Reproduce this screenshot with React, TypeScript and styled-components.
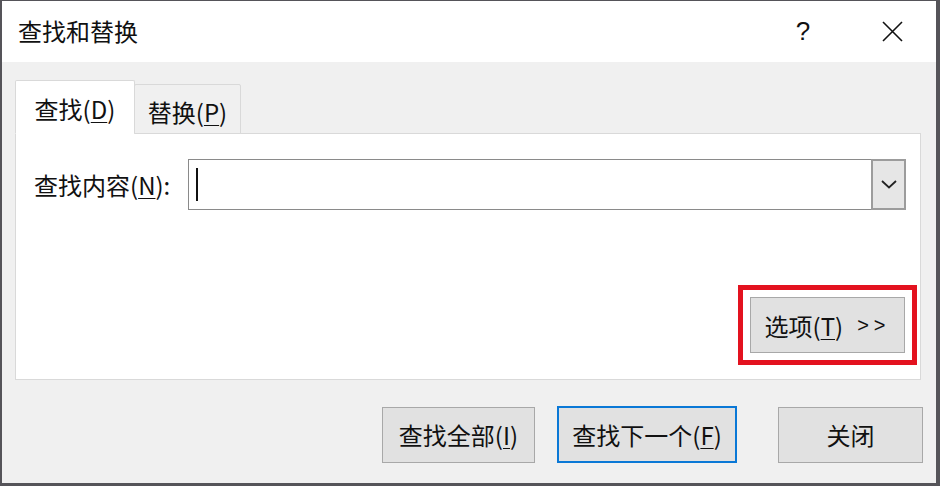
import React from 'react'
import styled, { createGlobalStyle } from 'styled-components'

const GlobalStyle = createGlobalStyle`
  html, body {
    margin: 0;
    padding: 0;
    background: #4a4a4a;
  }
  * {
    box-sizing: border-box;
  }
`

const FONT = `"Noto Sans CJK SC", "Microsoft YaHei", "Noto Sans", sans-serif`

const Dialog = styled.div`
  width: 940px;
  height: 486px;
  display: flex;
  flex-direction: column;
  border-style: solid;
  border-color: #555459;
  border-width: 1px 4px 3px 2px;
  font-family: ${FONT};
  color: #111;
  overflow: hidden;
`

const TitleBar = styled.div`
  height: 61px;
  flex-shrink: 0;
  display: flex;
  align-items: center;
  background: #ffffff;
  padding: 0 14px 0 16px;
`

const Title = styled.div`
  flex: 1;
  font-size: 24px;
  padding-bottom: 2px;
`

const TitleControls = styled.div`
  display: flex;
  align-items: center;
  gap: 29px;
`

const HeaderButton = styled.div`
  width: 60px;
  height: 40px;
  display: flex;
  align-items: center;
  justify-content: center;
  font-family: "Liberation Sans", Arial, sans-serif;
  font-size: 26px;
  color: #111;
`

const Body = styled.div`
  flex: 1;
  display: flex;
  flex-direction: column;
  background: #f0f0f0;
  padding: 18px 15px 20px 13px;
`

const TabRow = styled.div`
  display: flex;
  align-items: flex-end;
  margin-bottom: -1px;
  position: relative;
  z-index: 1;
`

const Tab = styled.div<{ $active?: boolean; $width: number }>`
  width: ${({ $width }) => $width}px;
  height: ${({ $active }) => ($active ? 54 : 50)}px;
  display: flex;
  align-items: center;
  justify-content: center;
  font-size: 24px;
  background: ${({ $active }) => ($active ? '#ffffff' : '#f0f0f0')};
  border: 1px solid #d9d9d9;
  border-bottom: ${({ $active }) => ($active ? '1px solid #ffffff' : '1px solid #d9d9d9')};
  margin-left: ${({ $active }) => ($active ? 0 : -1)}px;
  border-radius: 2px 2px 0 0;
  padding-top: ${({ $active }) => ($active ? 2 : 4)}px;
`

const Panel = styled.div`
  flex: 1;
  display: flex;
  flex-direction: column;
  background: #ffffff;
  border: 1px solid #d9d9d9;
  padding: 25px 3px 14px 18px;
`

const FieldRow = styled.div`
  display: flex;
  align-items: center;
  gap: 18px;
  margin-right: 11px;
`

const Label = styled.div`
  font-size: 24px;
  white-space: nowrap;
`

const Key = styled.span`
  text-decoration: underline;
  text-underline-offset: 3px;
  text-decoration-thickness: 1px;
`

const ComboBox = styled.div`
  flex: 1;
  height: 51px;
  display: flex;
  border: 1px solid #8a8a8a;
  background: #ffffff;
`

const Field = styled.div`
  flex: 1;
  display: flex;
  align-items: center;
  padding-left: 7px;
`

const Caret = styled.div`
  width: 2px;
  height: 33px;
  background: #111;
`

const DropButton = styled.div`
  width: 35px;
  margin: -1px -1px -1px 0;
  display: flex;
  align-items: center;
  justify-content: center;
  background: #e6e6e6;
  border: 2px solid #9c9c9c;
`

const Spacer = styled.div`
  flex: 1;
`

const Highlight = styled.div`
  align-self: flex-end;
  border: 5px solid #e3121f;
  padding: 7px;
`

const Button = styled.div<{ $width: number; $gap?: number; $primary?: boolean }>`
  width: ${({ $width }) => $width}px;
  height: ${({ $primary }) => ($primary ? 57 : 56)}px;
  margin-left: ${({ $gap }) => $gap ?? 0}px;
  display: flex;
  align-items: center;
  justify-content: center;
  font-size: 24px;
  white-space: nowrap;
  background: #e1e1e1;
  border: ${({ $primary }) => ($primary ? '2px solid #0a78d6' : '1px solid #a8a8a8')};
`

const Arrows = styled.span`
  margin-left: 14px;
  letter-spacing: 5px;
  font-family: "Liberation Sans", Arial, sans-serif;
  font-size: 20px;
`

const Footer = styled.div`
  display: flex;
  justify-content: flex-end;
  align-items: center;
  margin-top: 26px;
  margin-right: -2px;
`

export default function App() {
  return (
    <>
      <GlobalStyle />
      <Dialog>
        <TitleBar>
          <Title>查找和替换</Title>
          <TitleControls>
            <HeaderButton>?</HeaderButton>
            <HeaderButton>
              <svg width="21" height="21" viewBox="0 0 21 21">
                <path d="M1 1 L20 20 M20 1 L1 20" stroke="#111" strokeWidth="1.6" fill="none" />
              </svg>
            </HeaderButton>
          </TitleControls>
        </TitleBar>
        <Body>
          <TabRow>
            <Tab $active $width={120}>
              查找(<Key>D</Key>)
            </Tab>
            <Tab $width={107}>
              替换(<Key>P</Key>)
            </Tab>
          </TabRow>
          <Panel>
            <FieldRow>
              <Label>
                查找内容(<Key>N</Key>):
              </Label>
              <ComboBox>
                <Field>
                  <Caret />
                </Field>
                <DropButton>
                  <svg width="16" height="9" viewBox="0 0 16 9">
                    <path d="M1 1 L8 7.5 L15 1" stroke="#222" strokeWidth="1.8" fill="none" />
                  </svg>
                </DropButton>
              </ComboBox>
            </FieldRow>
            <Spacer />
            <Highlight>
              <Button $width={155}>
                选项(<Key>T</Key>)<Arrows>&gt;&gt;</Arrows>
              </Button>
            </Highlight>
          </Panel>
          <Footer>
            <Button $width={153}>
              查找全部(<Key>I</Key>)
            </Button>
            <Button $width={180} $gap={22} $primary>
              查找下一个(<Key>F</Key>)
            </Button>
            <Button $width={145} $gap={41}>
              关闭
            </Button>
          </Footer>
        </Body>
      </Dialog>
    </>
  )
}
